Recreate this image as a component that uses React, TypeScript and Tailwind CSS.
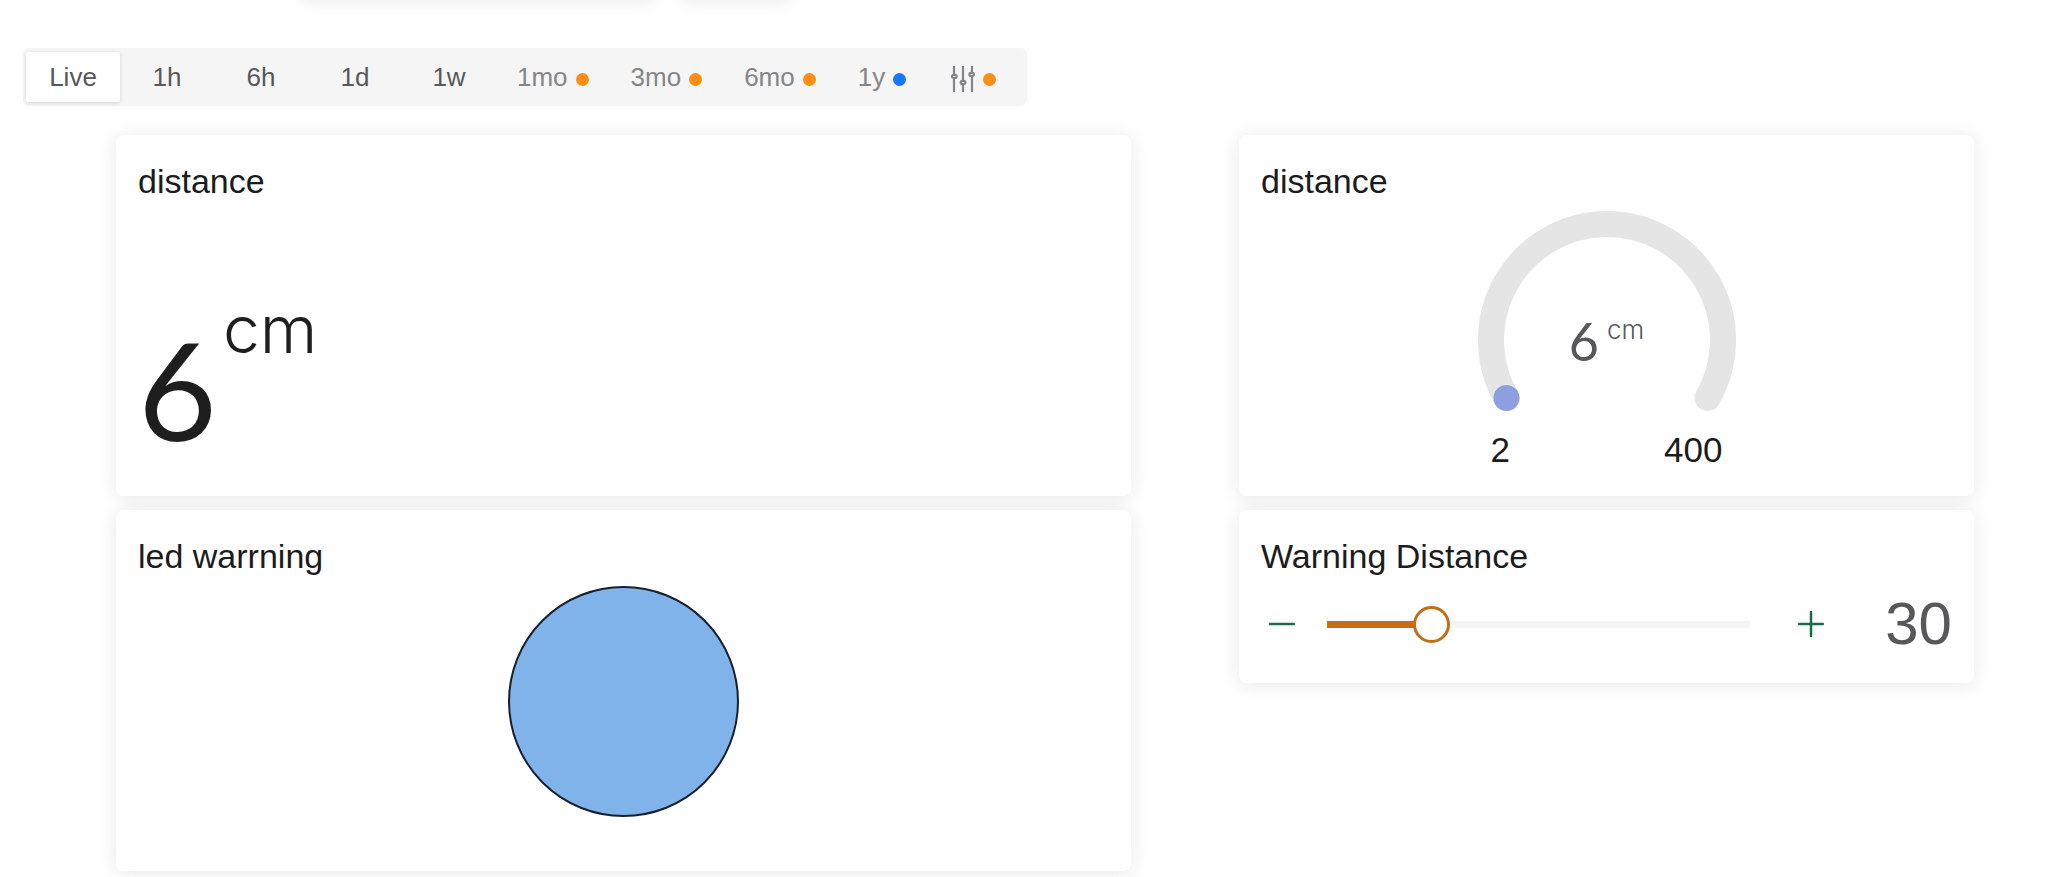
import { useState } from 'react';
import type { ReactNode } from 'react';
import clsx from 'clsx';

const ranges = [
  { label: 'Live' },
  { label: '1h' },
  { label: '6h' },
  { label: '1d' },
  { label: '1w' },
  { label: '1mo', dot: 'bg-[#fc8d15]' },
  { label: '3mo', dot: 'bg-[#fc8d15]' },
  { label: '6mo', dot: 'bg-[#fc8d15]' },
  { label: '1y', dot: 'bg-[#1677ff]' },
  { label: 'Custom', dot: 'bg-[#fc8d15]', icon: true },
];

const SlidersIcon = () => (
  <svg className="mt-1 w-6 h-7" viewBox="0 0 24 28" fill="none" stroke="currentColor" strokeWidth="2.2">
    <path d="M3 1v8M3 14v13M12 1v14M12 20v7M21 1v6M21 12v15" />
    <rect x="1" y="9.8" width="4.6" height="3.2" rx="1.6" />
    <rect x="9.7" y="15.8" width="4.6" height="3.2" rx="1.6" />
    <rect x="18.4" y="7.8" width="4.6" height="3.2" rx="1.6" />
  </svg>
);

const RangePicker = () => {
  const [active, setActive] = useState('Live');

  return (
    <div className="flex w-fit rounded-md bg-[#f5f5f5] px-[3px] py-1">
      {ranges.map(({ label, dot, icon }) => (
        <button
          key={label}
          type="button"
          aria-label={label}
          onClick={() => setActive(label)}
          className={clsx(
            'flex h-[50px] items-center justify-center text-[26px]',
            !dot && 'w-[94px] text-[#58585b]',
            dot && 'gap-2 text-[#858589]',
            dot && (icon ? 'pr-7 pl-6' : 'px-[21px]'),
            active === label && 'rounded-xs bg-white shadow-[0_1px_4px_rgba(0,0,0,0.14)]'
          )}
        >
          {icon ? <SlidersIcon /> : <span>{label}</span>}
          {dot && <span className={clsx('mt-1 size-[13px] rounded-full', dot)} />}
        </button>
      ))}
    </div>
  );
};

type CardProps = {
  title: string;
  className?: string;
  children: ReactNode;
};

const Card = ({ title, className, children }: CardProps) => (
  <section
    className={clsx(
      'flex flex-col rounded-lg bg-white px-[22px] pt-6 shadow-[0_2px_20px_rgba(30,30,50,0.10)]',
      className
    )}
  >
    <h2 className="text-[34px] leading-[44px] text-[#1c1c1e]">{title}</h2>
    {children}
  </section>
);

const Gauge = () => (
  <div className="mx-auto flex w-[258px] flex-col">
    <div className="relative -mt-px h-[200px] pt-[9px]">
      <svg className="w-full" viewBox="0 0 258 201" fill="none">
        <path
          d="M28.5 187 A116 116 0 1 1 229.5 187"
          stroke="#e5e5e5"
          strokeWidth="26"
          strokeLinecap="round"
        />
        <circle cx="28.5" cy="187" r="13" fill="#8e9fe0" />
      </svg>
      <div className="absolute inset-x-0 top-[106px] flex items-start justify-center gap-2 text-[#58585b]">
        <span className="font-['Lato',sans-serif] text-[52px] leading-[66px]">6</span>
        <span className="font-['Inter',sans-serif] text-[26px] leading-[44px] font-light">cm</span>
      </div>
    </div>
    <div className="mt-[26px] flex justify-between px-[13px] text-[35px] leading-[44px] text-[#1c1c1e]">
      <span>2</span>
      <span>400</span>
    </div>
  </div>
);

const MIN = 10;
const MAX = 100;

const WarningSlider = () => {
  const [value, setValue] = useState(30);
  const filled = ((value - MIN) / (MAX - MIN)) * 100;

  return (
    <div className="flex h-[68px] items-center">
      <button
        type="button"
        aria-label="Decrease"
        className="ml-2 text-[#1a6b4a]"
        onClick={() => setValue(Math.max(MIN, value - 1))}
      >
        <svg className="size-[26px]" viewBox="0 0 26 26" stroke="currentColor" strokeWidth="2.5" strokeLinecap="round">
          <path d="M1 13h24" />
        </svg>
      </button>
      <input
        type="range"
        aria-label="Warning Distance"
        min={MIN}
        max={MAX}
        value={value}
        onChange={(e) => setValue(Number(e.target.value))}
        style={{
          backgroundImage: `linear-gradient(to right, #c46f14 ${filled}%, #f5f5f5 ${filled}%)`,
        }}
        className="mx-8 h-[7px] min-w-0 flex-1 appearance-none [&::-webkit-slider-thumb]:size-[37px] [&::-webkit-slider-thumb]:appearance-none [&::-webkit-slider-thumb]:rounded-full [&::-webkit-slider-thumb]:border-3 [&::-webkit-slider-thumb]:border-[#c46f14] [&::-webkit-slider-thumb]:bg-white"
      />
      <button
        type="button"
        aria-label="Increase"
        className="ml-4 text-[#1a6b4a]"
        onClick={() => setValue(Math.min(MAX, value + 1))}
      >
        <svg className="size-[26px]" viewBox="0 0 26 26" stroke="currentColor" strokeWidth="2.5" strokeLinecap="round">
          <path d="M1 13h24M13 1v24" />
        </svg>
      </button>
      <output className="w-[128px] text-right text-[60px] leading-[68px] text-[#58585b]">{value}</output>
    </div>
  );
};

const App = () => {
  return (
    <div className="overflow-hidden bg-white pb-[7px] font-['Liberation_Sans',Arial,sans-serif]">
      {/* Header buttons, scrolled out of view */}
      <div className="-mt-10 flex gap-6 pl-[300px]">
        <div className="h-10 w-[356px] rounded-lg shadow-[0_2px_16px_rgba(0,0,0,0.08)]" />
        <div className="h-10 w-[112px] rounded-lg shadow-[0_2px_16px_rgba(0,0,0,0.08)]" />
      </div>

      <nav className="mt-12 pl-[23px]">
        <RangePicker />
      </nav>

      {/* Widgets */}
      <main className="mt-[29px] grid grid-cols-[1015fr_735fr] items-start gap-x-[108px] pr-[74px] pl-[116px]">
        <div className="flex flex-col gap-[14px]">
          <Card title="distance" className="h-[361px]">
            <div className="mt-[86px] flex items-start gap-[6px] text-[#1e1e1e]">
              <span className="pt-8 font-['Lato',sans-serif] text-[136px] leading-[136px]">6</span>
              <span className="font-['Inter',sans-serif] text-[66px] leading-[80px] font-light">cm</span>
            </div>
          </Card>
          <Card title="led warrning" className="h-[361px]">
            <div className="mx-auto mt-2 size-[231px] rounded-full border-2 border-[#17202c] bg-[#80b3ea]" />
          </Card>
        </div>

        <div className="flex flex-col gap-[14px]">
          <Card title="distance" className="h-[361px]">
            <Gauge />
          </Card>
          <Card title="Warning Distance" className="h-[173px]">
            <div className="mt-3">
              <WarningSlider />
            </div>
          </Card>
        </div>
      </main>
    </div>
  );
};

export default App;
